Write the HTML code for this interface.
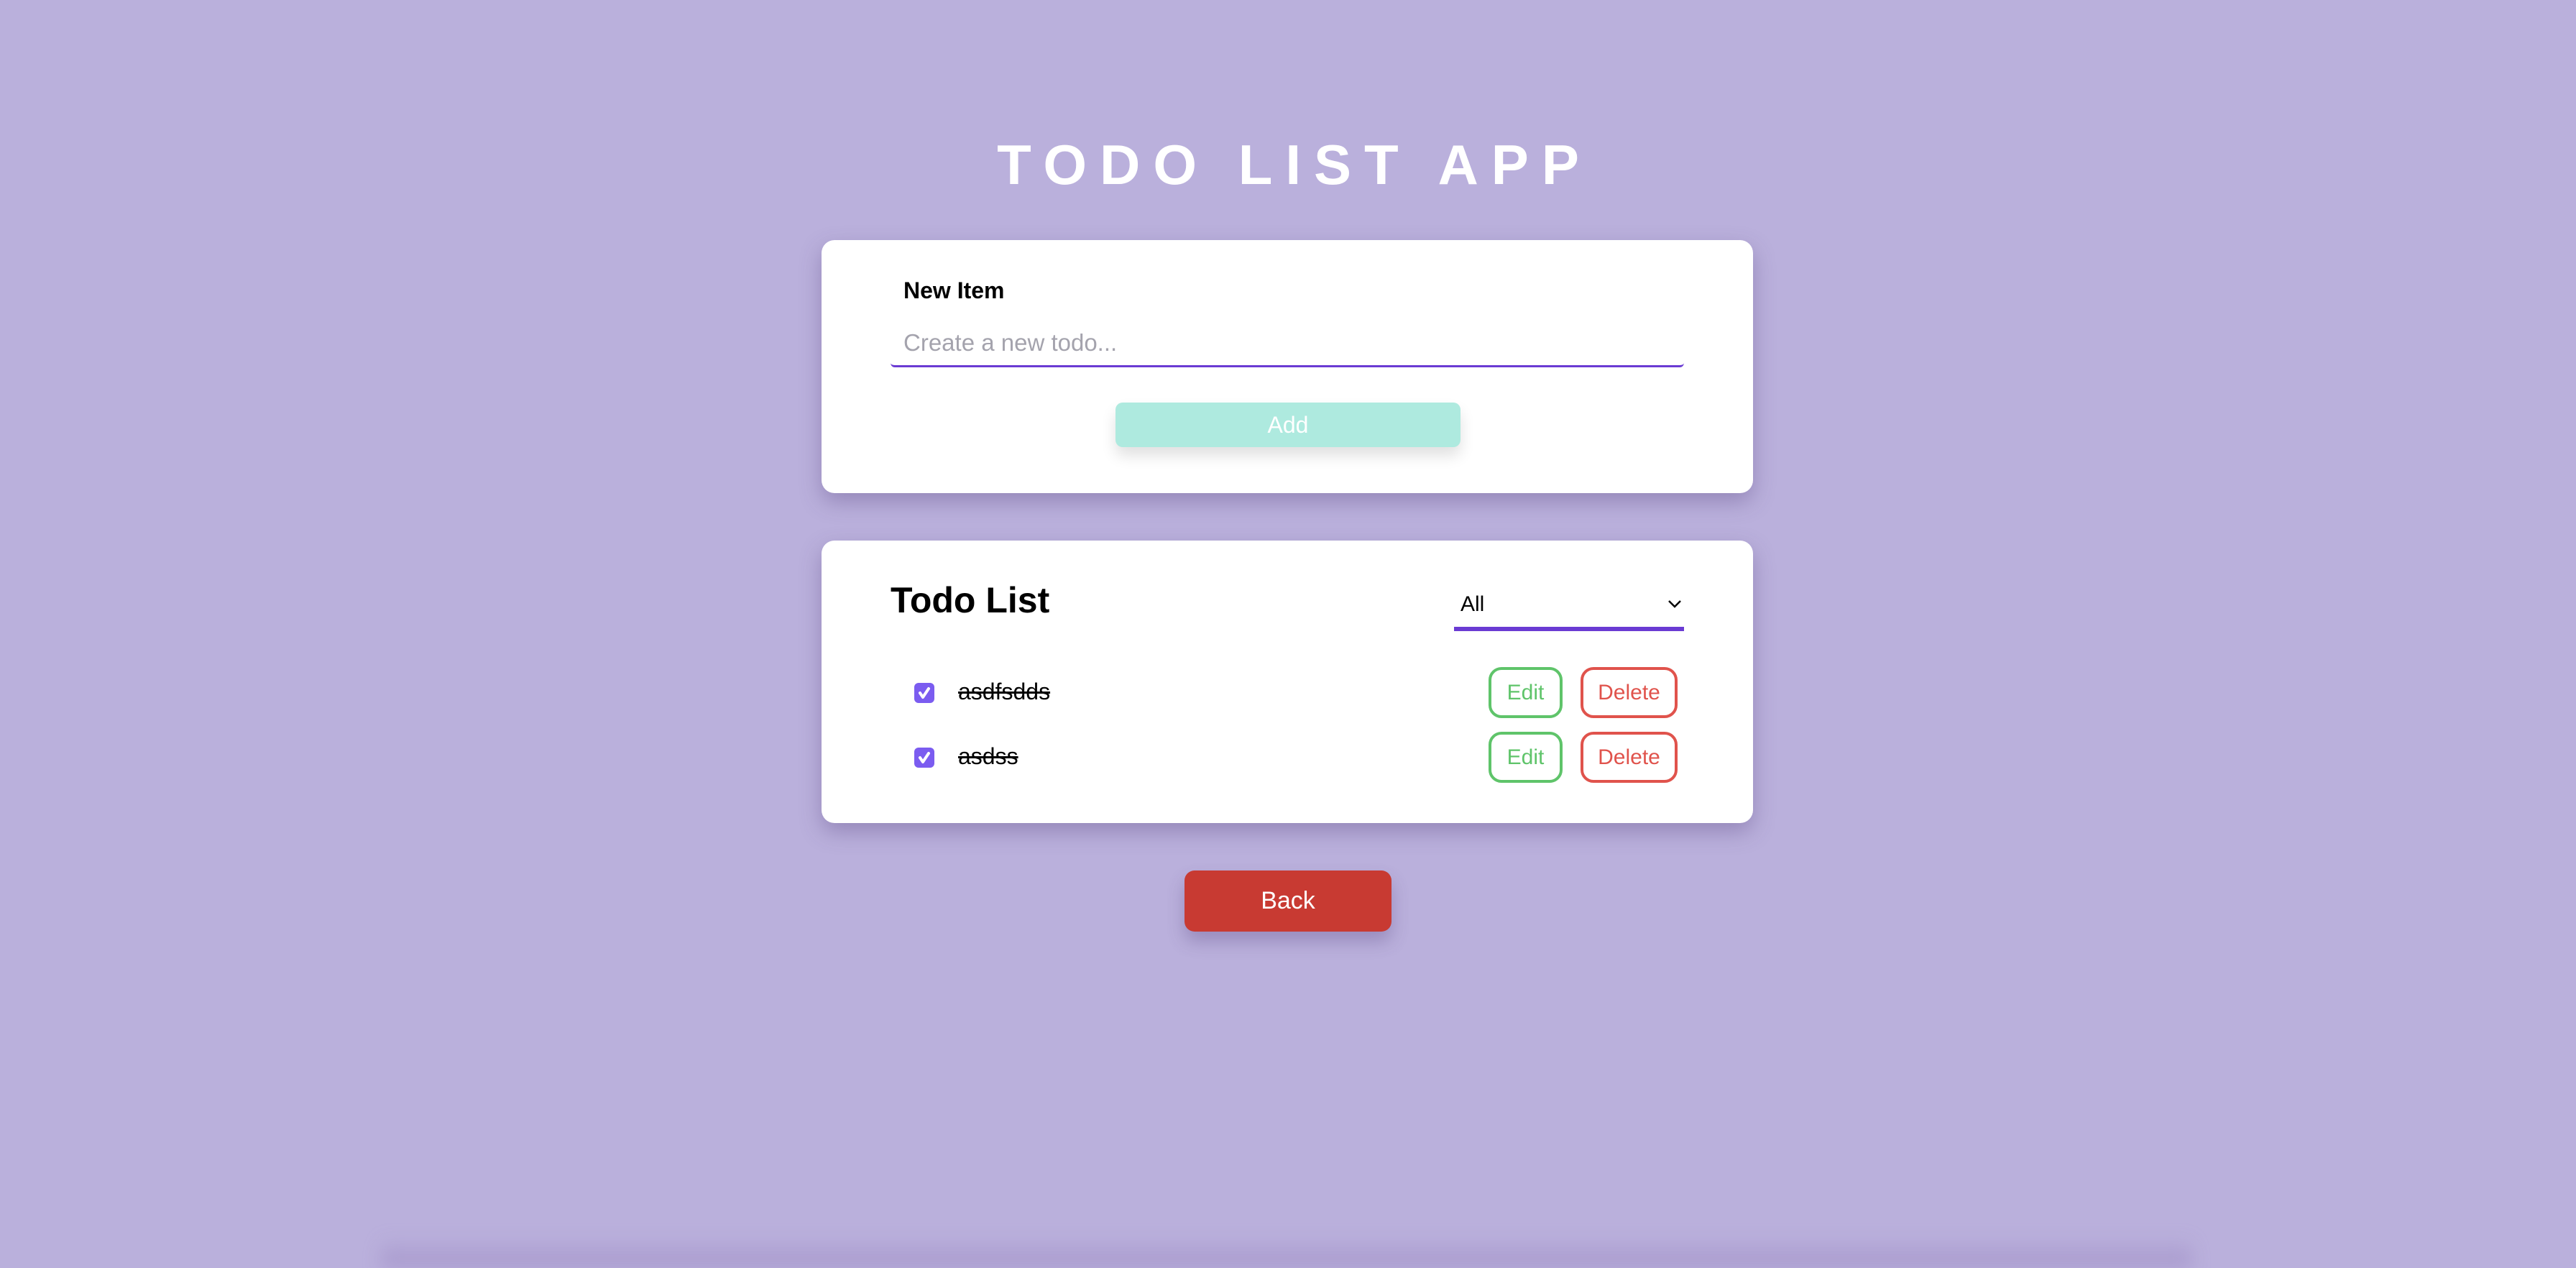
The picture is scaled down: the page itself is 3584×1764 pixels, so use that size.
<!DOCTYPE html>
<html><head><meta charset="utf-8"><style>
html,body{margin:0;padding:0;overflow:hidden}
body{width:3584px;height:1764px;background:#bab0dc;position:relative;overflow:hidden;font-family:"Liberation Sans",Arial,sans-serif;}
.abs{position:absolute}
h1{position:absolute;left:0;width:3584px;top:184px;margin:0;text-align:center;color:#fff;font-size:78px;font-weight:bold;letter-spacing:18px;text-indent:18px;line-height:90px}
.card{position:absolute;left:1143px;width:1296px;background:#fff;border-radius:18px;box-shadow:0 12px 30px rgba(80,60,120,.35)}
.btn{position:absolute;border-radius:18px;box-sizing:border-box;text-align:center;font-size:30px}
</style></head><body>
<div style="position:absolute;left:530px;top:1720px;width:2520px;height:44px;background:linear-gradient(to bottom,rgba(150,130,190,0),rgba(150,130,190,.55));filter:blur(12px)"></div>
<h1>TODO LIST APP</h1>
<div class="card" style="top:334px;height:352px">
  <div class="abs" style="left:114px;top:52px;font-size:32px;font-weight:bold;color:#000">New Item</div>
  <div class="abs" style="left:96px;top:108px;width:1104px;height:66px;border-bottom:3px solid #6a3bd3;border-radius:0 0 6px 6px"></div>
  <div class="abs" style="left:114px;top:124px;font-size:33px;color:#a4a3ad">Create a new todo...</div>
  <div class="btn" style="left:409px;top:226px;width:480px;height:62px;background:#aeeadf;color:#fff;line-height:62px;font-size:32px;border-radius:10px;box-shadow:0 12px 20px rgba(0,0,0,.12)">Add</div>
</div>
<div class="card" style="top:752px;height:393px">
  <div class="abs" style="left:96px;top:54px;font-size:50px;font-weight:bold;color:#000">Todo List</div>
  <div class="abs" style="left:880px;top:70px;width:320px;height:50px;border-bottom:6px solid #6a3bd3"></div>
  <div class="abs" style="left:889px;top:72px;font-size:30px;color:#000">All</div>
  <svg class="abs" style="left:1176px;top:80px" width="22" height="16" viewBox="0 0 22 16"><path d="M3 4 L11 12 L19 4" fill="none" stroke="#000" stroke-width="2.5"/></svg>
  <div class="abs" style="left:129px;top:198px;width:28px;height:28px;background:#7b5cf0;border-radius:6px"></div>
  <svg class="abs" style="left:129px;top:198px" width="28" height="28" viewBox="0 0 28 28"><path d="M8 14 L12 20 L20 8" fill="none" stroke="#fff" stroke-width="4" stroke-linecap="round" stroke-linejoin="round"/></svg>
  <div class="abs" style="left:190px;top:192px;font-size:32px;color:#000;text-decoration:line-through">asdfsdds</div>
  <div class="abs" style="left:129px;top:288px;width:28px;height:28px;background:#7b5cf0;border-radius:6px"></div>
  <svg class="abs" style="left:129px;top:288px" width="28" height="28" viewBox="0 0 28 28"><path d="M8 14 L12 20 L20 8" fill="none" stroke="#fff" stroke-width="4" stroke-linecap="round" stroke-linejoin="round"/></svg>
  <div class="abs" style="left:190px;top:282px;font-size:32px;color:#000;text-decoration:line-through">asdss</div>
  <div class="btn" style="left:928px;top:176px;width:103px;height:71px;border:4px solid #5fc46a;color:#5fc46a;line-height:63px">Edit</div>
  <div class="btn" style="left:1056px;top:176px;width:135px;height:71px;border:4px solid #e0534c;color:#e0534c;line-height:63px">Delete</div>
  <div class="btn" style="left:928px;top:266px;width:103px;height:71px;border:4px solid #5fc46a;color:#5fc46a;line-height:63px">Edit</div>
  <div class="btn" style="left:1056px;top:266px;width:135px;height:71px;border:4px solid #e0534c;color:#e0534c;line-height:63px">Delete</div>
</div>
<div class="btn" style="left:1648px;top:1211px;width:288px;height:85px;background:#c83a32;color:#fff;line-height:85px;font-size:34px;border-radius:14px;box-shadow:0 14px 24px rgba(80,60,120,.3)">Back</div>
</body></html>
